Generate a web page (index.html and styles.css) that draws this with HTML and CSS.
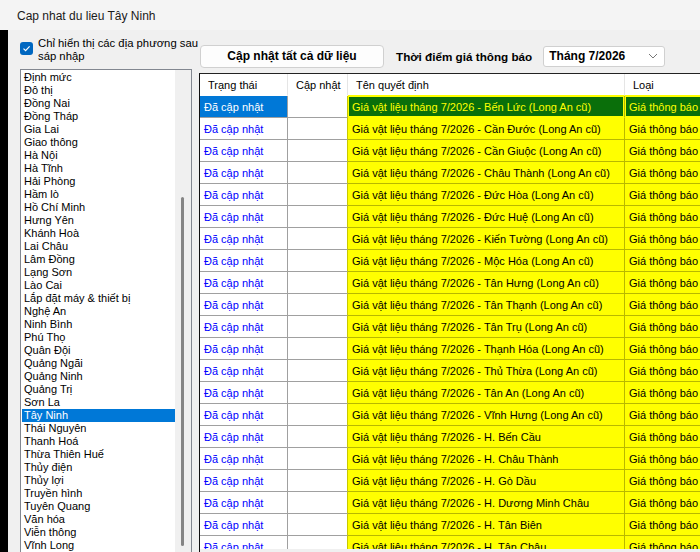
FILE: index.html
```html
<!DOCTYPE html>
<html lang="vi">
<head>
    <meta charset="UTF-8">
    <title>Cap nhat du lieu Tây Ninh</title>
    <link rel="stylesheet" href="styles.css">
</head>
<body>
    <div class="window">
        <div class="titlebar">Cap nhat du lieu Tây Ninh</div>

        <div class="content">
            <div class="edge"></div>

            <!-- left side: filter + list of provinces -->
            <div class="sidebar">
                <label class="check-row">
                    <span class="checkbox">
                        <svg width="9" height="9" viewBox="0 0 9 9"><path d="M1.5 4.6 L3.6 6.6 L7.6 2.4" fill="none" stroke="#fff" stroke-width="1.2"/></svg>
                    </span>
                    <span class="check-text">Chỉ hiển thị các địa phương sau<br>sáp nhập</span>
                </label>

                <div class="listbox">
                    <ul class="items">
                        <li>Định mức</li>
                        <li>Đô thị</li>
                        <li>Đồng Nai</li>
                        <li>Đồng Tháp</li>
                        <li>Gia Lai</li>
                        <li>Giao thông</li>
                        <li>Hà Nội</li>
                        <li>Hà Tĩnh</li>
                        <li>Hải Phòng</li>
                        <li>Hầm lò</li>
                        <li>Hồ Chí Minh</li>
                        <li>Hưng Yên</li>
                        <li>Khánh Hoà</li>
                        <li>Lai Châu</li>
                        <li>Lâm Đồng</li>
                        <li>Lạng Sơn</li>
                        <li>Lào Cai</li>
                        <li>Lắp đặt máy &amp; thiết bị</li>
                        <li>Nghệ An</li>
                        <li>Ninh Bình</li>
                        <li>Phú Thọ</li>
                        <li>Quân Đội</li>
                        <li>Quảng Ngãi</li>
                        <li>Quảng Ninh</li>
                        <li>Quảng Trị</li>
                        <li>Sơn La</li>
                        <li class="selected">Tây Ninh</li>
                        <li>Thái Nguyên</li>
                        <li>Thanh Hoá</li>
                        <li>Thừa Thiên Huế</li>
                        <li>Thủy điện</li>
                        <li>Thủy lợi</li>
                        <li>Truyền hình</li>
                        <li>Tuyên Quang</li>
                        <li>Văn hóa</li>
                        <li>Viễn thông</li>
                        <li>Vĩnh Long</li>
                    </ul>
                    <div class="vscroll"><div class="thumb"></div></div>
                </div>
            </div>

            <!-- right side: toolbar + grid -->
            <div class="main">
                <div class="toolbar">
                    <button class="btn">Cập nhật tất cả dữ liệu</button>
                    <span class="tool-label">Thời điểm giá thông báo</span>
                    <div class="combo">
                        <span>Tháng 7/2026</span>
                        <svg width="10" height="6" viewBox="0 0 10 6"><path d="M1 1 L5 5 L9 1" fill="none" stroke="#777" stroke-width="1"/></svg>
                    </div>
                </div>

                <div class="grid">
                    <div class="grid-body">
                        <table>
                            <colgroup>
                                <col class="c-status">
                                <col class="c-update">
                                <col class="c-name">
                                <col class="c-type">
                            </colgroup>
                            <thead>
                                <tr>
                                    <th>Trạng thái</th>
                                    <th>Cập nhật</th>
                                    <th class="hl">Tên quyết định</th>
                                    <th class="hl">Loại</th>
                                </tr>
                            </thead>
                            <tbody id="rows"></tbody>
                        </table>
                    </div>
                    <div class="hscroll"></div>
                </div>
            </div>
        </div>
    </div>

    <script>
        var names = [
            'Bến Lức (Long An cũ)', 'Cần Đước (Long An cũ)', 'Cần Giuộc (Long An cũ)',
            'Châu Thành (Long An cũ)', 'Đức Hòa (Long An cũ)', 'Đức Huệ (Long An cũ)',
            'Kiến Tường (Long An cũ)', 'Mộc Hóa (Long An cũ)', 'Tân Hưng (Long An cũ)',
            'Tân Thạnh (Long An cũ)', 'Tân Trụ (Long An cũ)', 'Thạnh Hóa (Long An cũ)',
            'Thủ Thừa (Long An cũ)', 'Tân An (Long An cũ)', 'Vĩnh Hưng (Long An cũ)',
            'H. Bến Cầu', 'H. Châu Thành', 'H. Gò Dầu', 'H. Dương Minh Châu',
            'H. Tân Biên', 'H. Tân Châu'
        ];

        var tbody = document.getElementById('rows');
        names.forEach(function (n, i) {
            var tr = document.createElement('tr');
            if (i === 0) tr.className = 'current';
            tr.innerHTML =
                '<td class="status">Đã cập nhật</td>' +
                '<td class="update"></td>' +
                '<td class="name">Giá vật liệu tháng 7/2026 - ' + n + '</td>' +
                '<td class="type">Giá thông báo</td>';
            tbody.appendChild(tr);
        });
    </script>
</body>
</html>
```

FILE: styles.css
```css
body {
    margin: 0;
    font-family: 'Liberation Sans', Arial, sans-serif;
    font-size: 11px;
    color: #000;
    background: #f0f0f0;
}
.window {
    width: 700px;
    height: 552px;
    overflow: hidden;
}
.titlebar {
    height: 30px;
    line-height: 32px;
    padding-left: 17px;
    font-size: 12px;
    background: #f4f4f4;
    color: #1a1a1a;
}
.content {
    display: flex;
    height: 522px;
}
.edge {
    width: 8px;
    background: #000;
    flex-shrink: 0;
}
.sidebar {
    width: 185px;
    flex-shrink: 0;
    padding: 7px 0 0 12px;
    box-sizing: border-box;
}
.check-row {
    display: flex;
    align-items: flex-start;
    height: 32px;
}
.checkbox {
    width: 13px;
    height: 13px;
    margin-top: 5px;
    border-radius: 3px;
    background: #0067c0;
    display: flex;
    align-items: center;
    justify-content: center;
    flex-shrink: 0;
}
.check-text {
    margin-left: 5px;
    line-height: 13px;
    font-size: 11.3px;
    white-space: nowrap;
}
.listbox {
    display: flex;
    width: 172px;
    height: 500px;
    border: 1px solid #828790;
    background: #fff;
    box-sizing: border-box;
}
.items {
    list-style: none;
    margin: 0;
    padding: 1px 0 0 1px;
    flex: 1;
}
.items li {
    height: 13px;
    line-height: 13px;
    padding-left: 2px;
    white-space: nowrap;
}
.items li.selected {
    background: #0078d7;
    color: #fff;
}
.vscroll {
    width: 16px;
    background: #f0f0f0;
    position: relative;
}
.thumb {
    position: absolute;
    left: 6px;
    top: 127px;
    width: 3px;
    height: 349px;
    border-radius: 2px;
    background: #858585;
}
.main {
    flex: 1;
    padding-left: 6px;
    min-width: 0;
}
.toolbar {
    display: flex;
    align-items: center;
    height: 43px;
    padding-left: 1px;
    padding-top: 9px;
    box-sizing: border-box;
}
.btn {
    width: 184px;
    height: 23px;
    padding: 0;
    background: #fdfdfd;
    border: 1px solid #d0d0d0;
    border-radius: 4px;
    font-family: inherit;
    font-size: 12px;
    font-weight: bold;
    color: #000;
}
.tool-label {
    margin-left: 12px;
    font-size: 11.7px;
    font-weight: bold;
}
.combo {
    display: flex;
    align-items: center;
    justify-content: space-between;
    width: 122px;
    height: 21px;
    margin-left: 11px;
    padding: 0 6px 0 5px;
    box-sizing: border-box;
    background: #fff;
    border: 1px solid #d0d0d0;
    border-radius: 3px;
    font-size: 12px;
    font-weight: bold;
}
.grid {
    border-left: 1px solid #111;
    border-top: 1px solid #222;
    background: #f0f0f0;
    height: 479px;
    overflow: hidden;
}
.grid-body {
    height: 475px;
    overflow: hidden;
    background: #fff;
}
table {
    border-collapse: separate;
    border-spacing: 0;
    table-layout: fixed;
    width: 545px;
}
.c-status { width: 88px; }
.c-update { width: 60px; }
.c-name { width: 277px; }
.c-type { width: 120px; }
th, td {
    height: 21px;
    padding: 0;
    white-space: nowrap;
    overflow: hidden;
    text-align: left;
    font-weight: normal;
    border-right: 1px solid #a0a0a0;
    border-bottom: 1px solid #a0a0a0;
}
th {
    background: #fff;
    border-right-color: #e5e5e5;
    border-bottom-color: #fff;
    padding-left: 8px;
}
th.hl {
    border-bottom-color: #ffff00;
}
td.status {
    color: #0000ff;
    padding-left: 4px;
}
td.update {
    border-right-color: #c8c800;
}
td.name,
td.type {
    background: #ffff00;
    border-color: #b8b800;
    padding-left: 4px;
}
tr.current td.status {
    background: #0078d7;
    color: #fff;
}
tr.current td.name,
tr.current td.type {
    background: #0a6f0a;
    color: #ffff00;
    box-shadow: inset 0 0 0 1px #ffff00;
    border-bottom-color: #ffff00;
}
.hscroll {
    height: 4px;
    background: #f0f0f0;
}
```
